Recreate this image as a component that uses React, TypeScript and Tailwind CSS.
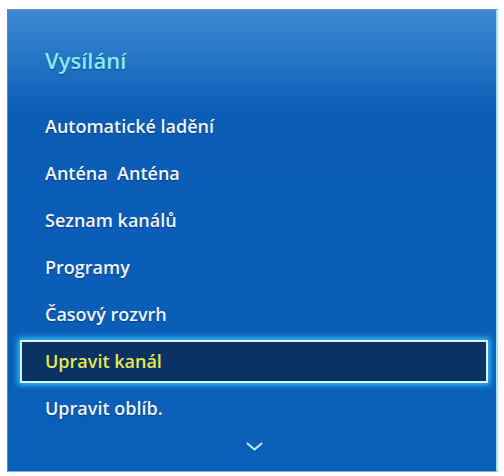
const items = [
  'Automatické ladění',
  'Anténa  Anténa',
  'Seznam kanálů',
  'Programy',
  'Časový rozvrh',
  'Upravit kanál',
  'Upravit oblíb.',
];

const SELECTED = 5;

export default function App() {
  return (
    <div className="h-[476px] w-[504px] bg-white pl-[7px] pt-[9px]" style={{ fontFamily: '"Open Sans", "DejaVu Sans", sans-serif' }}>
      <div className="flex h-[463px] w-[491px] flex-col border-t border-l border-r-2 border-b border-t-[#6f8fb5] border-l-[#5e86b8] border-r-[#a8e2f4] border-b-[#7fb0d8] bg-[linear-gradient(to_bottom,#3e88d2_0px,#2a78c8_40px,#0b5db6_100px,#0a5fb9_100%)]">
        {/* Header */}
        <div className="h-[93px] pl-[37px] pt-[35px] text-[22px] leading-[30px] font-semibold text-[#86ecf4] [text-shadow:0_1px_1px_rgba(0,30,80,0.5)]">
          Vysílání
        </div>

        {/* Menu items */}
        <div className="flex flex-col">
          {items.map((label, i) =>
            i === SELECTED ? (
              <div key={label} className="flex h-[47px] items-center pl-[12px] pr-[8px]">
                <div className="flex h-[43px] w-full items-center border-2 border-[#d6f4ff] bg-[#0b3263] pl-[23px] text-[18px] font-semibold text-[#e4e852] shadow-[0_0_6px_2px_#35c4ff]">
                  {label}
                </div>
              </div>
            ) : (
              <div
                key={label}
                className="h-[47px] whitespace-pre pl-[37px] text-[18px] leading-[47px] font-semibold text-[#f2f6ff] [text-shadow:0_1px_1px_rgba(0,30,80,0.5)]"
              >
                {label}
              </div>
            )
          )}
        </div>

        {/* Scroll indicator */}
        <div className="flex justify-center pt-[10px] pl-[4px]">
          <svg width="17" height="9" viewBox="0 0 17 9" fill="none">
            <path d="M1.5 1.5 L8.5 7.5 L15.5 1.5" stroke="#c9e6ff" strokeWidth="2" strokeLinecap="round" strokeLinejoin="round" />
          </svg>
        </div>
      </div>
    </div>
  );
}
